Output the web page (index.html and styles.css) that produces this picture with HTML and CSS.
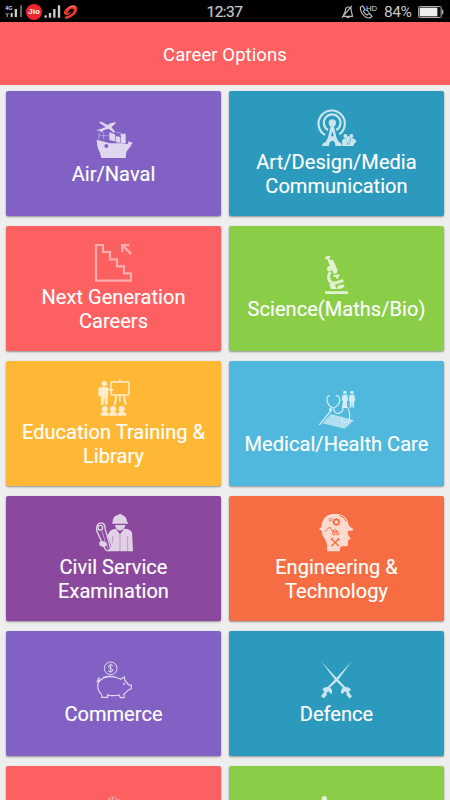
FILE: index.html
```html
<!DOCTYPE html>
<html lang="en">
<head>
<meta charset="utf-8">
<title>Career Options</title>
<link rel="stylesheet" href="styles.css">
</head>
<body>
<div class="status">
  <div class="signals">
    <svg class="net" viewBox="0 0 54 42"><g fill="#888"><rect x="5" y="27" width="4" height="9"/><rect x="1" y="25" width="12" height="3"/><rect x="17" y="24" width="6" height="12" fill="#ccc"/><rect x="29" y="12" width="7" height="24" fill="#ccc"/><rect x="45" y="1" width="6" height="35" fill="#666"/></g><text x="1" y="14" class="gen">4G</text></svg>
    <span class="jio">Jio</span>
    <svg class="bars" viewBox="0 0 50 42"><g fill="#ccc"><rect x="1" y="31" width="7" height="7"/><rect x="14" y="24" width="7" height="14"/><rect x="27" y="12" width="7" height="26"/><rect x="41" y="1" width="7" height="37"/></g></svg>
    <svg class="swirl" viewBox="0 0 46 48"><path d="M3 24C12 5 34-2 42 8C49 24 30 42 8 46L5 39C22 36 36 24 32 16C28 10 18 17 15 25C13 29 19 28 24 22C24 31 12 37 6 32Q1 29 3 24Z" fill="#e83a28"/><path d="M8 19C17 5 35 0 39 10C30 5 18 9 8 19Z" fill="#ff8d7a"/></svg>
  </div>
  <div class="clock">12:37</div>
  <div class="right">
    <svg class="bell" viewBox="0 0 38 42"><path d="M6 32Q13 22 14 10Q23 2 29 10L34 34H5M2 38L32 3M16 35Q20 41 25 35" fill="none" stroke="#bbb" stroke-width="3.500"/></svg>
    <svg class="call" viewBox="0 0 54 42"><path d="M4 7L11 3L18 13L13 19Q17 27 24 30L31 25L39 34Q31 43 20 36Q4 26 4 7ZM20 15Q28 16 29 22" fill="none" stroke="#bbb" stroke-width="3.500"/><text x="21" y="18" class="hd">HD</text></svg>
    <span class="percent">84%</span>
    <svg class="battery" viewBox="0 0 78 36"><rect x="1.500" y="1.500" width="68" height="33" rx="3" fill="#111" stroke="#aaa" stroke-width="3"/><rect x="5" y="5" width="53" height="26" fill="#eee"/><rect x="71" y="11" width="5" height="14" fill="#aaa"/></svg>
  </div>
</div>
<header class="header">Career Options</header>
<main class="grid">
  <section class="card purple">
    <svg class="icon" viewBox="0 0 41 41"><g transform="translate(-13 -31) scale(.33333)">
      <path d="M50 149L89 160H128L156 164Q146 174 139 186L137 204H64L60 188Q51 175 50 149Z"/>
      <circle cx="79" cy="168" r="6" class="cut-purple"/>
      <path d="M58 95L66 96L82 105Q96 96 107 97Q108 100 94 111L106 126L101 128L86 116L70 121L65 128L61 123L48 121L62 117L77 111L59 99Z"/>
      <path d="M88 127L105 133V154L88 150ZM107 138L121 141V159L107 156ZM123 131H137V160L123 158ZM145 152L149 157L156 156L157 162L144 165Z"/>
      <path d="M57 128V148M57 137H86M71 126V148M108 128H121V138" class="line thin" opacity=".7"/>
    </g></svg>
    <h2>Air/Naval</h2>
  </section>
  <section class="card teal">
    <svg class="icon" viewBox="0 0 41 41"><g transform="translate(-11 -9) scale(.33333)">
      <circle cx="82" cy="69" r="11"/>
      <path d="M69 90A25 25 0 1 1 94 90M60 105A39.500 39.500 0 1 1 103 103" class="line" stroke-width="6.500"/>
      <path d="M77 79H87L94 112Q100 127 110 132V138H91Q91 123 82 122Q72 123 72 138H52V132Q64 127 69 112Z"/>
      <path d="M82 93L86 109H78Z" class="cut-teal"/>
      <circle cx="121" cy="108" r="6"/><circle cx="139" cy="108" r="6"/><circle cx="130" cy="116" r="7"/><path d="M111 124Q113 115 123 115L127 124L117 138H112ZM137 124L138 115Q151 113 154 126L149 129L145 137ZM116 138Q117 123 130 123Q145 123 145 138Z"/><path d="M126 126L130 134L135 126" class="seam-teal"/>
    </g></svg>
    <h2>Art/Design/Media Communication</h2>
  </section>
  <section class="card red">
    <svg class="icon" viewBox="0 0 41 41"><g transform="translate(-13 -9) scale(.33333)" opacity=".65">
      <path d="M48 30H69V51H90V73H111V94H132V115H153V137H48Z" class="line" stroke-width="6.500"/>
      <path d="M123 27H148V34H135L156 55L151 60L130 39V51H123Z"/>
    </g></svg>
    <h2>Next Generation Careers</h2>
  </section>
  <section class="card green">
    <svg class="icon" viewBox="0 0 41 41"><g transform="translate(-11 -11) scale(.33333)">
      <path d="M60 36L74 30L77 36L72 39L75 45L84 44L98 76L95 85L86 87L79 72L70 50L67 42L62 44Z"/>
      <path d="M76 81Q66 96 75 109Q84 118 96 113L115 106" class="line" stroke-width="9"/>
      <path d="M73 116H89L95 132H77ZM60 139H129V147H60ZM85 90L103 88L104 94L99 96L101 101H94L93 96L86 96ZM97 124Q106 116 118 119V125Q111 133 96 132Z"/>
      <circle cx="74" cy="71" r="8"/><path d="M82 74Q82 80 77 81" class="seam-green"/>
    </g></svg>
    <h2>Science(Maths/Bio)</h2>
  </section>
  <section class="card yellow">
    <svg class="icon" viewBox="0 0 41 41"><g transform="translate(-13 -9) scale(.33333)">
      <circle cx="73" cy="41" r="8"/>
      <path d="M62 51H80L88 57L99 58V63L84 61V76L82 105H75L73 79L70 105H63L62 74L60 79H55V57Q56 52 62 51Z"/>
      <rect x="93" y="36" width="54" height="39" rx="4" class="line" stroke-width="4.500"/>
      <path d="M117 28H122V35H117ZM106 77H112L107 104H101ZM117 77H122V95H117ZM129 77H135L140 104H134Z"/>
      <circle cx="74" cy="117" r="9"/><circle cx="99" cy="117" r="9"/><circle cx="125" cy="117" r="9"/>
      <path d="M62 137V130L69 125H79L86 130V137ZM88 137V130L94 125H104L111 130V137ZM113 137V130L120 125H130L138 130V137Z"/>
    </g></svg>
    <h2>Education Training &amp; Library</h2>
  </section>
  <section class="card sky">
    <svg class="icon" viewBox="0 0 41 41"><g transform="translate(-11 -11) scale(.33333)">
      <path d="M78 102L147 121L119 146L52 130Z" opacity=".75"/>
      <circle cx="120" cy="37" r="5"/><circle cx="141" cy="37" r="5"/>
      <path d="M113 44H127L129 62H126V84H114V63L110 61ZM134 44H148L151 62H148L147 83H143L141 66L139 83H134V63L131 61Z"/>
      <path d="M75 47Q65 47 66 59Q68 80 86 84Q104 77 104 60Q103 45 92 47M86 84Q87 102 101 100Q117 94 113 83Q112 70 121 74Q136 90 134 112Q132 130 119 127Q105 122 112 112" class="line" stroke-width="3.500"/>
      <circle cx="119" cy="72" r="7"/><path d="M41 134L77 90L79 94L45 136Z"/><circle cx="77" cy="89" r="5"/>
    </g></svg>
    <h2>Medical/Health Care</h2>
  </section>
  <section class="card violet">
    <svg class="icon" viewBox="0 0 41 41"><g transform="translate(-13 -9) scale(.33333)">
      <path d="M98 50Q99 31 116 30V26H125V30Q140 33 141 50L144 53V56H97V52ZM105 60H136Q134 75 120 77Q107 75 105 60Z"/>
      <path d="M90 78Q95 72 108 71L120 88L133 71Q153 72 156 83L159 139H84L94 124L82 91Z"/>
      <path d="M120 88V139M143 94V139M98 93V114" class="seam-violet" opacity=".6"/>
      <path d="M69 55Q76 60 75 70L91 128Q91 138 83 137Q77 137 74 130L51 79Q47 62 57 56Q63 52 69 55Z" class="line" stroke-width="4"/>
      <circle cx="61" cy="68" r="7" class="line" stroke-width="4"/><path d="M66 78L79 121M78 112L85 134" class="line thin"/>
      <path d="M58 111Q64 106 76 110L82 120L73 127Q65 125 58 121Z"/>
    </g></svg>
    <h2>Civil Service Examination</h2>
  </section>
  <section class="card orange">
    <svg class="icon" viewBox="0 0 41 41"><g transform="translate(-11 -9) scale(.33333)">
      <path d="M49 66Q51 27 91 26Q126 27 132 62L145 73L142 77H129L128 86L137 102L129 106V121Q126 126 111 123L105 128V139H66Q69 115 58 100Q50 89 50 77L42 73Z"/>
      <g class="detail"><circle cx="94" cy="51" r="8" stroke-width="5"/><path d="M94 39V44M94 58V63M82 51H87M101 51H106M86 43L89 46M99 56L103 60M86 60L90 56M99 46L103 42"/><circle cx="77" cy="44" r="4"/><path d="M103 31Q119 36 124 50M60 80L74 66L84 80M83 78L91 73L98 80H83"/><circle cx="86" cy="86" r="4"/><circle cx="98" cy="86" r="4"/><path d="M80 102L102 124M102 101L79 124M77 105L84 99M98 100L104 106" stroke-width="4"/></g>
    </g></svg>
    <h2>Engineering &amp; Technology</h2>
  </section>
  <section class="card purple">
    <svg class="icon" viewBox="0 0 41 41"><g transform="translate(-13 -11) scale(.33333)">
      <circle cx="92" cy="55" r="19" class="line" stroke-width="3"/>
      <path d="M99 48Q96 44 91 45Q84 46 86 52Q88 55 93 56Q100 58 98 63Q92 69 84 62M92 41V69" class="line" stroke-width="3"/>
      <path d="M61 91Q69 82 82 81Q104 78 122 88L133 81L135 93Q142 98 145 104L154 106V116L145 120Q139 128 132 131V143H121L118 135Q104 138 88 136L83 134V142H66L64 132Q54 124 53 109Q53 97 61 91ZM61 91L52 94L56 84L62 89M69 82Q90 76 111 83" class="line" stroke-width="3.500"/>
      <circle cx="132" cy="102" r="3"/>
    </g></svg>
    <h2>Commerce</h2>
  </section>
  <section class="card teal">
    <svg class="icon" viewBox="0 0 41 41"><g transform="translate(-236 -11) scale(.33333)">
      <path d="M723 34L772 86L804 119L799 123L766 91ZM815 34L774 91L738 124L734 120L767 86Z"/>
      <path d="M727 118Q738 106 753 115Q759 122 754 133L745 124L739 130L742 133L732 145L723 139L733 125ZM813 118Q801 106 788 114Q779 122 786 133L795 124L801 130L798 133L809 146L816 139L806 126Z"/>
    </g></svg>
    <h2>Defence</h2>
  </section>
  <section class="card partial red">
    <svg class="icon" viewBox="0 0 41 41"><g transform="translate(-93 -56) scale(.33333)">
      <path d="M325 181Q327 173 334 171M338 169V182M342 171Q349 173 351 181M355 178L360 181M331 178L335 181" class="line" stroke-width="3" opacity=".7"/>
    </g></svg>
  </section>
  <section class="card partial green">
    <svg class="icon" viewBox="0 0 41 41"><g transform="translate(-316 -56) scale(.33333)"><circle cx="973" cy="176" r="8"/></g></svg>
  </section>
</main>
</body>
</html>
```
FILE: styles.css
```css
* { box-sizing: border-box; }
body { margin: 0; height: 800px; overflow: hidden; background: #eee; font-family: Roboto, "Liberation Sans", sans-serif; }
.status { height: 22px; background: #000; color: #c8c8c8; display: grid; grid-template-columns: 1fr auto 1fr; align-items: center; padding: 0 6px 0 5px; }
.signals, .right { display: flex; align-items: center; }
.right { justify-content: flex-end; }
.net { width: 18px; height: 14px; margin-top: 1px; overflow: visible; }
.gen { font: 700 16px "Liberation Sans", sans-serif; fill: #ddd; }
.jio { width: 16px; height: 16px; margin-left: 3px; border-radius: 50%; background: #ee252d; color: #fff; font: 700 8px/16px "Liberation Sans", sans-serif; text-align: center; }
.bars { width: 17px; height: 14px; margin-left: 2px; }
.swirl { width: 15px; height: 16px; margin-left: 2px; }
.clock { font-size: 15.500px; line-height: 22px; letter-spacing: -.5px; padding-top: 1px; -webkit-text-stroke: .2px #c8c8c8; }
.bell { width: 13px; height: 14px; margin-right: 5px; }
.call { width: 18px; height: 14px; margin-right: 7px; overflow: visible; }
.hd { font: 23px "Liberation Sans", sans-serif; fill: #ddd; }
.percent { font-size: 15.500px; letter-spacing: -.5px; width: 27px; margin-right: 7px; }
.battery { width: 26px; height: 12px; }
.header { height: 63px; background: #fc6060; color: #fff; display: flex; align-items: center; justify-content: center; padding-top: 2px; font-size: 18.500px; letter-spacing: .08px; }
.grid { display: grid; grid-template-columns: 215px 215px; grid-auto-rows: 124.500px; gap: 10.500px 8px; height: 715px; overflow: hidden; padding: 6px 6px 0; }
.card { display: flex; flex-direction: column; align-items: center; justify-content: center; border-radius: 2px; box-shadow: 0 1px 2px rgba(0, 0, 0, .4); color: #fff; }
.partial { justify-content: flex-start; padding-top: 30px; }
.icon { width: 41px; height: 41px; flex: none; fill: #fff; opacity: .75; }
.card h2 { margin: 0; width: 195px; font-size: 20px; line-height: 24px; font-weight: 400; letter-spacing: .05px; text-align: center; -webkit-text-stroke: .15px #fff; }
.purple { background: #8162c4; }
.teal { background: #2b9abc; }
.red { background: #fc6060; }
.green { background: #8acd46; }
.yellow { background: #ffb836; }
.sky { background: #50b8dc; }
.violet { background: #8a499c; }
.orange { background: #f66d43; }
.line { fill: none; stroke: #fff; }
.thin { stroke-width: 2; }
.cut-purple { fill: #8162c4; }
.cut-teal { fill: #2b9abc; }
.seam-teal { fill: none; stroke: #2b9abc; stroke-width: 2; }
.seam-green { fill: none; stroke: #8acd46; stroke-width: 2; }
.seam-violet { fill: none; stroke: #8a499c; stroke-width: 2; }
.detail { fill: none; stroke: #f66d43; stroke-width: 3; }
```
